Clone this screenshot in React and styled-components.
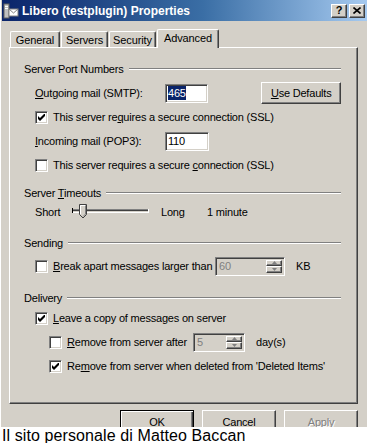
import React from "react";
import styled, { createGlobalStyle } from "styled-components";

const FACE = "#d4d0c8";

const GlobalStyle = createGlobalStyle`
  html, body {
    margin: 0;
    padding: 0;
    background: #fff;
    overflow: hidden;
  }
  body {
    font-family: "Liberation Sans", Arial, sans-serif;
    font-size: 11px;
    color: #000;
  }
  u {
    text-decoration-thickness: 1px;
    text-underline-offset: 1px;
  }
`;

const raised = `
  border: 1px solid;
  border-color: #fff #404040 #404040 #fff;
  box-shadow: inset -1px -1px #808080;
`;

const sunken = `
  border: 1px solid;
  border-color: #808080 #fff #fff #808080;
  box-shadow: inset 1px 1px #404040, inset -1px -1px ${FACE};
`;

const Window = styled.div`
  width: 367px;
  height: 427px;
  box-sizing: border-box;
  background: ${FACE};
  box-shadow: inset 1px 0 #fff;
  overflow: hidden;
`;

const TitleBar = styled.div`
  height: 21px;
  margin-left: 2px;
  padding-left: 1px;
  display: flex;
  align-items: center;
  background: linear-gradient(to right, #0a246a 0%, #3a6ea5 55%, #a6caf0 100%);
`;

const TitleText = styled.div`
  flex: 1;
  margin-left: 3px;
  color: #fff;
  font-weight: bold;
  font-size: 12px;
  letter-spacing: 0;
`;

const CaptionButton = styled.div`
  width: 16px;
  height: 14px;
  box-sizing: border-box;
  background: ${FACE};
  ${raised}
  display: flex;
  align-items: center;
  justify-content: center;
  font-weight: bold;
  font-size: 11px;
  line-height: 1;
  margin-right: ${(p) => p.$mr || 0}px;
`;

const Body = styled.div`
  padding: 8px 0 0 9px;
`;

const TabStrip = styled.div`
  height: 18px;
  padding-left: 1px;
  display: flex;
  gap: 1px;
  align-items: flex-end;
`;

const Tab = styled.div`
  position: relative;
  width: ${(p) => p.$w}px;
  height: ${(p) => (p.$active ? 19 : 16)}px;
  margin-bottom: ${(p) => (p.$active ? -1 : 0)}px;
  z-index: ${(p) => (p.$active ? 2 : 1)};
  box-sizing: border-box;
  background: ${FACE};
  border-left: 1px solid #fff;
  border-top: 1px solid #fff;
  border-right: 1px solid #404040;
  border-radius: 2px 2px 0 0;
  box-shadow: inset -1px 0 #808080;
  display: flex;
  align-items: center;
  justify-content: center;
  padding-bottom: ${(p) => (p.$active ? 2 : 0)}px;
  letter-spacing: -0.1px;
`;

const Panel = styled.div`
  width: 349px;
  height: 357px;
  box-sizing: border-box;
  background: ${FACE};
  ${raised}
  padding: 14px 16px 0 14px;
`;

const Head = styled.div`
  height: 14px;
  display: flex;
  align-items: center;
  gap: 5px;
  letter-spacing: -0.2px;
  white-space: nowrap;

  &::after {
    content: "";
    flex: 1;
    border-top: 1px solid #808080;
    border-bottom: 1px solid #fff;
  }
`;

const Group = styled.div`
  margin-top: ${(p) => p.$mt || 0}px;

  ${Head} {
    margin-bottom: ${(p) => p.$lead || 0}px;
  }
`;

const Row = styled.div`
  height: 24px;
  display: flex;
  align-items: center;
  padding-left: ${(p) => (p.$level === 2 ? 25 : 11)}px;
  letter-spacing: -0.2px;
  white-space: nowrap;
`;

const Label = styled.span`
  width: ${(p) => (p.$w ? `${p.$w}px` : "auto")};
  flex: none;
  margin-left: ${(p) => p.$ml || 0}px;
`;

const Field = styled.div`
  width: 44px;
  height: 19px;
  box-sizing: border-box;
  background: #fff;
  ${sunken}
  display: flex;
  align-items: center;
  padding-left: 2px;
`;

const Selected = styled.span`
  background: #0a246a;
  color: #fff;
  padding: 1px 0;
`;

const Spin = styled.div`
  width: ${(p) => p.$w}px;
  height: ${(p) => p.$h || 19}px;
  box-sizing: border-box;
  background: ${FACE};
  ${sunken}
  display: flex;
  align-items: stretch;
  padding: 2px 2px 2px 3px;
  color: #808080;
  margin-left: ${(p) => p.$ml || 0}px;
`;

const SpinValue = styled.span`
  flex: 1;
  display: flex;
  align-items: center;
`;

const SpinButtons = styled.div`
  width: 16px;
  display: flex;
  flex-direction: column;
`;

const SpinHalf = styled.div`
  flex: 1;
  box-sizing: border-box;
  ${raised}
  display: flex;
  align-items: center;
  justify-content: center;
`;

const Button = styled.div`
  width: ${(p) => p.$w || 74}px;
  height: ${(p) => p.$h || 23}px;
  margin-left: ${(p) => p.$ml || 0}px;
  box-sizing: border-box;
  background: ${FACE};
  display: flex;
  align-items: center;
  justify-content: center;
  letter-spacing: -0.2px;
  color: ${(p) => (p.$disabled ? "#808080" : "#000")};
  text-shadow: ${(p) => (p.$disabled ? "1px 1px #fff" : "none")};
  border: 1px solid;
  border-color: ${(p) =>
    p.$default ? "#000" : "#fff #404040 #404040 #fff"};
  box-shadow: ${(p) =>
    p.$default
      ? "inset 1px 1px #fff, inset -1px -1px #404040, inset -2px -2px #808080"
      : "inset -1px -1px #808080"};
`;

const ButtonRow = styled.div`
  width: 349px;
  margin-top: 6px;
  display: flex;
  justify-content: flex-end;
  gap: 8px;
`;

const BoxFrame = styled.span`
  width: 13px;
  height: 13px;
  flex: none;
  box-sizing: border-box;
  background: #fff;
  ${sunken}
  display: flex;
  align-items: center;
  justify-content: center;
  margin-right: 5px;
`;

const SliderWrap = styled.div`
  width: 77px;
  height: 16px;
  flex: none;
  display: flex;
`;

const Footer = styled.div`
  height: 16px;
  padding-left: 2px;
  font-size: 16px;
  line-height: 18px;
  letter-spacing: 0.1px;
  color: #000;
  background: #fff;
  white-space: nowrap;
`;

const Checkbox = ({ on }) => (
  <BoxFrame>
    {on && (
      <svg width="7" height="7" viewBox="0 0 7 7">
        <path d="M0 2 L2 4 L6 0 L7 0 L7 2 L2 7 L0 5 Z" fill="#000" />
      </svg>
    )}
  </BoxFrame>
);

const AppIcon = () => (
  <svg width="16" height="16" viewBox="0 0 16 16">
    <rect x="1" y="1" width="5" height="14" fill="#c0c0c0" stroke="#606060" strokeWidth="1" />
    <rect x="2" y="3" width="3" height="1" fill="#fff" />
    <rect x="2" y="5" width="3" height="1" fill="#fff" />
    <rect x="6" y="6" width="9" height="7" fill="#fff" stroke="#808080" strokeWidth="1" />
    <path d="M6 6 L10.5 10 L15 6" fill="none" stroke="#808080" strokeWidth="1" />
  </svg>
);

const CloseGlyph = () => (
  <svg width="8" height="7" viewBox="0 0 8 7">
    <path d="M0.5 0.5 L7.5 6.5 M7.5 0.5 L0.5 6.5" stroke="#000" strokeWidth="1.6" />
  </svg>
);

const Arrow = ({ up }) => (
  <svg width="5" height="3" viewBox="0 0 5 3">
    <path d={up ? "M2.5 0 L5 3 L0 3 Z" : "M0 0 L5 0 L2.5 3 Z"} fill="#808080" />
  </svg>
);

const Slider = () => (
  <SliderWrap>
    <svg width="77" height="16" viewBox="0 0 77 16">
      <rect x="0" y="4" width="1" height="5" fill="#000" />
      <line x1="1" y1="5.5" x2="76" y2="5.5" stroke="#808080" />
      <line x1="1" y1="6.5" x2="76" y2="6.5" stroke="#404040" />
      <line x1="1" y1="7.5" x2="76" y2="7.5" stroke="#d4d0c8" />
      <line x1="1" y1="8.5" x2="77" y2="8.5" stroke="#fff" />
      <line x1="76.5" y1="5" x2="76.5" y2="9" stroke="#fff" />
      <path d="M7.5 0.5 L14.5 0.5 L14.5 10.5 L11 14 L7.5 10.5 Z" fill="#d4d0c8" stroke="#404040" />
      <path d="M8.5 10 L8.5 1.5 L13.5 1.5" fill="none" stroke="#fff" />
      <path d="M13.5 1.5 L13.5 10 L11 12.5" fill="none" stroke="#808080" />
    </svg>
  </SliderWrap>
);

const SpinBox = ({ value, w, ml }) => (
  <Spin $w={w} $ml={ml}>
    <SpinValue>{value}</SpinValue>
    <SpinButtons>
      <SpinHalf>
        <Arrow up />
      </SpinHalf>
      <SpinHalf>
        <Arrow />
      </SpinHalf>
    </SpinButtons>
  </Spin>
);

export default function App() {
  return (
    <>
      <GlobalStyle />
      <Window>
        <TitleBar>
          <AppIcon />
          <TitleText>Libero (testplugin) Properties</TitleText>
          <CaptionButton $mr={2}>?</CaptionButton>
          <CaptionButton $mr={2}>
            <CloseGlyph />
          </CaptionButton>
        </TitleBar>
        <Body>
          <TabStrip>
            <Tab $w={50}>General</Tab>
            <Tab $w={47}>Servers</Tab>
            <Tab $w={47}>Security</Tab>
            <Tab $w={62} $active>
              Advanced
            </Tab>
          </TabStrip>
          <Panel>
            <Group $lead={5}>
              <Head>Server Port Numbers</Head>
              <Row>
                <Label $w={130}>
                  <u>O</u>utgoing mail (SMTP):
                </Label>
                <Field>
                  <Selected>465</Selected>
                </Field>
                <Button $w={81} $h={22} $ml={53}>
                  <u>U</u>se Defaults
                </Button>
              </Row>
              <Row>
                <Checkbox on />
                <Label>
                  This server re<u>q</u>uires a secure connection (SSL)
                </Label>
              </Row>
              <Row>
                <Label $w={130}>
                  <u>I</u>ncoming mail (POP3):
                </Label>
                <Field>110</Field>
              </Row>
              <Row>
                <Checkbox />
                <Label>
                  This server requires a secure <u>c</u>onnection (SSL)
                </Label>
              </Row>
            </Group>

            <Group $mt={9} $lead={0}>
              <Head>
                <span>
                  Server <u>T</u>imeouts
                </span>
              </Head>
              <Row>
                <Label $w={37}>Short</Label>
                <Slider />
                <Label $w={46} $ml={12}>
                  Long
                </Label>
                <Label>1 minute</Label>
              </Row>
            </Group>

            <Group $mt={12} $lead={4}>
              <Head>Sending</Head>
              <Row>
                <Checkbox />
                <Label $w={162}>
                  <u>B</u>reak apart messages larger than
                </Label>
                <SpinBox value="60" w={70} />
                <Label $ml={11}>KB</Label>
              </Row>
            </Group>

            <Group $mt={13} $lead={1}>
              <Head>Delivery</Head>
              <Row>
                <Checkbox on />
                <Label>
                  <u>L</u>eave a copy of messages on server
                </Label>
              </Row>
              <Row $level={2}>
                <Checkbox />
                <Label $w={126}>
                  <u>R</u>emove from server after
                </Label>
                <SpinBox value="5" w={52} />
                <Label $ml={11}>day(s)</Label>
              </Row>
              <Row $level={2}>
                <Checkbox on />
                <Label>
                  Re<u>m</u>ove from server when deleted from 'Deleted Items'
                </Label>
              </Row>
            </Group>
          </Panel>
          <ButtonRow>
            <Button $default>OK</Button>
            <Button>Cancel</Button>
            <Button $disabled>
              <u>A</u>pply
            </Button>
          </ButtonRow>
        </Body>
      </Window>
      <Footer>Il sito personale di Matteo Baccan</Footer>
    </>
  );
}
